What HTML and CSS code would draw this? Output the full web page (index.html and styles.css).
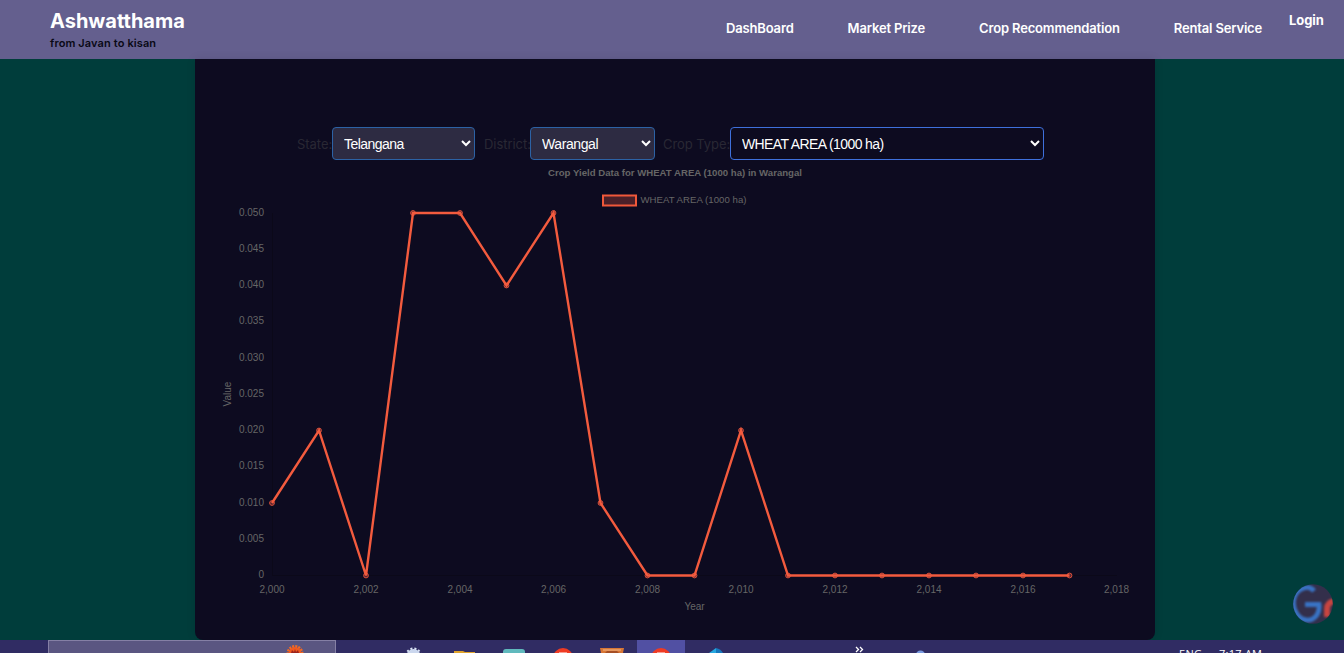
FILE: index.html
```html
<!DOCTYPE html>
<html lang="en">
<head>
<meta charset="utf-8">
<title>Ashwatthama</title>
<link rel="stylesheet" href="styles.css">
</head>
<body>
<header class="header">
  <div class="brand">
    <div class="brand-name">Ashwatthama</div>
    <div class="brand-tag">from Javan to kisan</div>
  </div>
  <nav class="nav">
    <a>DashBoard</a>
    <a>Market Prize</a>
    <a>Crop Recommendation</a>
    <a>Rental Service</a>
  </nav>
  <a class="login">Login</a>
</header>
<main class="page">
  <section class="panel">
    <form class="filters">
      <label class="label">State:</label>
      <select class="select select-state"><option>Telangana</option></select>
      <label class="label">District:</label>
      <select class="select select-district"><option>Warangal</option></select>
      <label class="label">Crop Type:</label>
      <select class="select select-crop"><option>WHEAT AREA (1000 ha)</option></select>
    </form>
    <svg class="chart" width="960" height="480" viewBox="195 160 960 480">
      <text class="chart-title" x="675" y="176" textLength="254">Crop Yield Data for WHEAT AREA (1000 ha) in Warangal</text>
      <rect class="legend-box" x="603" y="195.500" width="33" height="10"/>
      <text class="legend" x="640.500" y="203" textLength="106">WHEAT AREA (1000 ha)</text>
      <path class="axis" d="M272.500 213V575.500M272 575.500H1117"/>
      <g class="tick-y">
        <text x="264" y="216">0.050</text><text x="264" y="252">0.045</text>
        <text x="264" y="288">0.040</text><text x="264" y="324">0.035</text>
        <text x="264" y="361">0.030</text><text x="264" y="397">0.025</text>
        <text x="264" y="433">0.020</text><text x="264" y="469">0.015</text>
        <text x="264" y="506">0.010</text><text x="264" y="542">0.005</text>
        <text x="264" y="578">0</text>
      </g>
      <g class="tick-x">
        <text x="272" y="593">2,000</text><text x="366" y="593">2,002</text>
        <text x="460" y="593">2,004</text><text x="553.500" y="593">2,006</text>
        <text x="647.500" y="593">2,008</text><text x="741" y="593">2,010</text>
        <text x="835" y="593">2,012</text><text x="929" y="593">2,014</text>
        <text x="1023" y="593">2,016</text><text x="1116.500" y="593">2,018</text>
        <text x="694.500" y="610">Year</text>
        <text transform="translate(231 394) rotate(-90)">Value</text>
      </g>
      <g class="points">
        <circle cx="272" cy="503" r="2.400"/><circle cx="319" cy="430.500" r="2.400"/><circle cx="366" cy="575.500" r="2.400"/>
        <circle cx="413" cy="213" r="2.400"/><circle cx="460" cy="213" r="2.400"/><circle cx="506.500" cy="285.500" r="2.400"/>
        <circle cx="553.500" cy="213" r="2.400"/><circle cx="600.500" cy="503" r="2.400"/><circle cx="647.500" cy="575.500" r="2.400"/>
        <circle cx="694.500" cy="575.500" r="2.400"/><circle cx="741" cy="430.500" r="2.400"/><circle cx="788" cy="575.500" r="2.400"/>
        <circle cx="835" cy="575.500" r="2.400"/><circle cx="882" cy="575.500" r="2.400"/><circle cx="929" cy="575.500" r="2.400"/>
        <circle cx="976" cy="575.500" r="2.400"/><circle cx="1023" cy="575.500" r="2.400"/><circle cx="1069.500" cy="575.500" r="2.400"/>
      </g>
      <polyline class="line" points="272,503 319,430.500 366,575.500 413,213 460,213 506.500,285.500 553.500,213 600.500,503 647.500,575.500 694.500,575.500 741,430.500 788,575.500 835,575.500 882,575.500 929,575.500 976,575.500 1023,575.500 1069.500,575.500"/>
    </svg>
  </section>
  <svg class="badge" width="40" height="40" viewBox="0 0 40 40">
    <defs><clipPath id="disc"><circle cx="20" cy="20" r="19.800"/></clipPath></defs>
    <g clip-path="url(#disc)">
      <rect width="40" height="40" fill="#332f4b"/>
      <g class="badge-glyph">
        <path d="M21 7C16 0 4 4 1 14C-2 27 7 37 16 36C23 35 27 28 26 20.500H12" stroke="#3973c4" stroke-width="4.800"/>
        <path d="M34 33V25Q34 18 42 17" stroke="#c74540" stroke-width="6"/>
      </g>
    </g>
  </svg>
</main>
<footer class="taskbar">
  <div class="search"></div>
  <svg class="icons" width="1344" height="13" viewBox="0 640 1344 13">
    <rect x="637" y="640" width="48" height="13" fill="#5150a3"/>
    <circle cx="295" cy="653.500" r="7" fill="none" stroke="#f36a24" stroke-width="3" stroke-dasharray="2 1"/>
    <circle cx="295" cy="653.500" r="6.500" fill="#ef5a20"/>
    <path d="M291 653l1-3 2 2 1-3 1 3 2-2 1 3z" fill="#9c241c"/>
    <circle cx="413.500" cy="656" r="7" fill="#cbd7ee"/>
    <circle cx="413.500" cy="656" r="7.500" fill="none" stroke="#dbe5f6" stroke-width="2" stroke-dasharray="2 2"/>
    <path d="M454 653v-2h9l2 1h10v1z" fill="#dfa22b"/>
    <rect x="503" y="649" width="22" height="12" rx="3" fill="#60b9bd"/>
    <g id="red-app"><circle cx="563" cy="658" r="10" fill="#ef3b23"/><path d="M559 653h8" stroke="#fff" fill="none"/></g>
    <use href="#red-app" x="98"/>
    <path d="M600 648h24l-1 5h-22z" fill="#d87635"/><path d="M603 650h18" stroke="#f3b98b"/><path d="M605 653l2-2h10l2 2z" fill="#a64f25"/>
    <path d="M709 653l7-5v5z" fill="#25a8e0"/><path d="M716 648q5 1 7 5h-7z" fill="#1678bd"/>
    <path d="M856 647l2.500 2.500-2.500 2.500M860 647l2.500 2.500-2.500 2.500" fill="none" stroke="#fff" stroke-width="1.300"/>
    <circle cx="920.500" cy="655" r="4.500" fill="#7899df"/>
    <text class="tray" x="1179" y="658" textLength="23">ENG</text>
    <text class="tray" x="1219" y="658" textLength="43">7:17 AM</text>
  </svg>
</footer>
</body>
</html>
```
FILE: styles.css
```css
* { box-sizing: border-box; }
body { margin: 0; height: 653px; overflow: hidden; display: flex; flex-direction: column; background: #003d3b; font-family: Inter, sans-serif; }
.header { height: 59px; flex: none; display: flex; background: #645f8e; color: #fff; padding-left: 50px; }
.brand { width: 676px; padding-top: 9px; }
.brand-name { font-size: 20px; line-height: 24px; font-weight: 700; }
.brand-tag { font-size: 11px; line-height: 14px; margin-top: 3px; font-weight: 600; letter-spacing: .12px; color: #090915; }
.nav { display: flex; gap: 54px; padding-top: 20px; font-size: 13px; line-height: 17px; font-weight: 600; letter-spacing: -.16px; white-space: nowrap; }
.login { margin-left: 27px; padding-top: 12px; font-size: 13px; line-height: 17px; font-weight: 700; letter-spacing: -.1px; }
.page { height: 581px; flex: none; display: flex; padding-left: 195px; }
.panel { width: 960px; height: 581px; background: #0d0b20; border-radius: 0 0 8px 8px; box-shadow: 0 0 10px rgba(0,0,0,.1); padding-top: 68px; }
.filters { display: flex; align-items: center; height: 33px; padding-left: 102px; }
.label { font: 13px/18px Inter, sans-serif; letter-spacing: -.05px; color: #292834; white-space: nowrap; width: 35px; }
.select { height: 33px; border: 1px solid #2c62a5; border-radius: 4px; background: #2d2b42; color: #fff; font: 14px "Liberation Sans", Arial, sans-serif; letter-spacing: -.6px; padding: 0 8px 0 7px; }
.select-state { width: 143px; margin-right: 9px; letter-spacing: -.55px; }
.select-state + .label { width: 46px; }
.select-district { width: 125px; margin-right: 8px; letter-spacing: -.4px; }
.select-district + .label { width: 67px; }
.select-crop { width: 314px; background: #0d0b20; border-color: #3e70dc; }
.chart { display: block; font: 10px "Liberation Sans", Arial, sans-serif; fill: #666; }
.chart-title { font-size: 9.6px; font-weight: 700; text-anchor: middle; }
.legend { font-size: 9.6px; }
.legend-box { fill: #4a2029; stroke: #f0583a; stroke-width: 2; }
.axis { fill: none; stroke: #0b0919; }
.tick-y { text-anchor: end; }
.tick-x { text-anchor: middle; }
.line { fill: none; stroke: #f35b3e; stroke-width: 2.4; }
.points { fill: #5a2630; stroke: #d94f3a; stroke-width: 1; }
.badge { margin: 525px 0 0 138px; }
.badge-glyph { fill: none; filter: blur(.9px); }
.taskbar { height: 13px; flex: none; display: grid; background: #302c63; }
.search { grid-area: 1 / 1; width: 288px; margin-left: 48px; background: #5a5681; border: 1px solid #8580a5; border-bottom: 0; }
.icons { grid-area: 1 / 1; }
.tray { font: 11px "Open Sans", sans-serif; fill: #fff; }
```
